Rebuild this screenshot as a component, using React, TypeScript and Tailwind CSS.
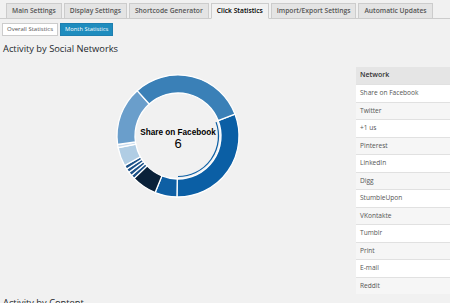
import React from 'react';

interface Segment {
  name: string;
  from: number;
  to: number;
  color: string;
}

const tabs = [
  'Main Settings',
  'Display Settings',
  'Shortcode Generator',
  'Click Statistics',
  'Import/Export Settings',
  'Automatic Updates',
];

const networks = [
  'Share on Facebook',
  'Twitter',
  '+1 us',
  'Pinterest',
  'LinkedIn',
  'Digg',
  'StumbleUpon',
  'VKontakte',
  'Tumblr',
  'Print',
  'E-mail',
  'Reddit',
];

// angles in degrees, clockwise from 12 o'clock
const segments: Segment[] = [
  { name: 'Share on Facebook', from: 69, to: 181, color: '#0b5fa5' },
  { name: 'Twitter', from: 181, to: 202, color: '#0e5fa4' },
  { name: '+1 us', from: 202, to: 226, color: '#0a2139' },
  { name: 'Pinterest', from: 226, to: 229.75, color: '#1d5288' },
  { name: 'LinkedIn', from: 229.75, to: 233.5, color: '#1d5288' },
  { name: 'Digg', from: 233.5, to: 237.25, color: '#1d5288' },
  { name: 'StumbleUpon', from: 237.25, to: 241, color: '#1d5288' },
  { name: 'VKontakte', from: 241, to: 259, color: '#b0cde4' },
  { name: 'Tumblr', from: 259, to: 262, color: '#c9dcee' },
  { name: 'Print', from: 262, to: 318, color: '#6a9ecb' },
  { name: 'E-mail', from: 318, to: 429, color: '#3a80b7' },
];

const CX = 178;
const CY = 75;

const pt = (r: number, a: number) => {
  const rad = (a * Math.PI) / 180;
  return [CX + r * Math.sin(rad), CY - r * Math.cos(rad)];
};

const arcPath = (r0: number, r1: number, a0: number, a1: number) => {
  const large = a1 - a0 > 180 ? 1 : 0;
  const [x0, y0] = pt(r1, a0);
  const [x1, y1] = pt(r1, a1);
  const [x2, y2] = pt(r0, a1);
  const [x3, y3] = pt(r0, a0);
  return `M${x0} ${y0} A${r1} ${r1} 0 ${large} 1 ${x1} ${y1} L${x2} ${y2} A${r0} ${r0} 0 ${large} 0 ${x3} ${y3} Z`;
};

const lineArc = (r: number, a0: number, a1: number) => {
  const [x0, y0] = pt(r, a0);
  const [x1, y1] = pt(r, a1);
  return `M${x0} ${y0} A${r} ${r} 0 0 1 ${x1} ${y1}`;
};

const Donut: React.FC = () => (
  <svg width="356" height="150" viewBox="0 0 356 150" className="block">
    {segments.map((s) => (
      <path
        key={s.name}
        d={arcPath(43, 61, s.from, s.to)}
        fill={s.color}
        stroke="#ffffff"
        strokeWidth="1.3"
      />
    ))}
    {/* hover highlight on the selected slice */}
    <path d={lineArc(40.5, 70, 180)} fill="none" stroke="#0b5fa5" strokeWidth="1.2" />
    <text
      x={CX}
      y={CY - 1}
      textAnchor="middle"
      fontFamily="'Liberation Sans', Arial, sans-serif"
      fontWeight="bold"
      fontSize="8.2"
      fill="#000"
    >
      Share on Facebook
    </text>
    <text
      x={CX}
      y={CY + 12}
      textAnchor="middle"
      fontFamily="'Liberation Sans', Arial, sans-serif"
      fontSize="13"
      fill="#000"
    >
      6
    </text>
  </svg>
);

export default function App() {
  return (
    <div
      className="w-[450px] h-[303px] overflow-hidden bg-[#f1f1f1] text-[#444]"
      style={{ fontFamily: "'Open Sans', 'Liberation Sans', sans-serif" }}
    >
      {/* Tabs */}
      <div className="flex gap-[2px] pl-[6px] pt-[3px] border-b border-[#cccccc]">
        {tabs.map((t) => (
          <div
            key={t}
            className={`h-[16px] px-[5px] shrink-0 whitespace-nowrap flex items-center text-[6.7px] font-semibold border border-[#cccccc] -mb-px ${
              t === 'Click Statistics'
                ? 'bg-[#f1f1f1] text-[#000] border-b-[#f1f1f1]'
                : 'bg-[#e4e4e4] text-[#555]'
            }`}
          >
            {t}
          </div>
        ))}
      </div>

      {/* Sub buttons */}
      <div className="flex gap-[2px] pl-[2px] mt-[4px]">
        <div className="h-[13px] px-[4px] whitespace-nowrap flex items-center text-[6px] bg-white border border-[#cccccc] text-[#555]">
          Overall Statistics
        </div>
        <div className="h-[13px] px-[4px] whitespace-nowrap flex items-center text-[5.8px] bg-[#1e8cbe] border border-[#1e7fb0] text-white">
          Month Statistics
        </div>
      </div>

      <div className="flex">
        {/* Chart column */}
        <div className="w-[356px] shrink-0">
          <div className="pl-[3px] mt-[6px] text-[9.3px] leading-[14px] text-[#23282d]">
            Activity by Social Networks
          </div>
          <div className="mt-[5px]">
            <Donut />
          </div>
        </div>

        {/* Network table */}
        <div className="flex-1 mt-[31px]">
          <div className="h-[17px] flex items-center pl-[4px] bg-[#e5e5e5] text-[7px] font-semibold text-[#333]">
            Network
          </div>
          {networks.map((n, i) => (
            <div
              key={n}
              className={`h-[17.5px] flex items-center pl-[4px] text-[6.6px] text-[#555] border-t border-[#e1e1e1] ${
                i % 2 === 0 ? 'bg-white' : 'bg-[#f6f6f6]'
              }`}
            >
              {n}
            </div>
          ))}
        </div>
      </div>

      <div className="pl-[3px] mt-[2px] text-[9.3px] leading-[14px] text-[#23282d]">
        Activity by Content
      </div>
    </div>
  );
}
